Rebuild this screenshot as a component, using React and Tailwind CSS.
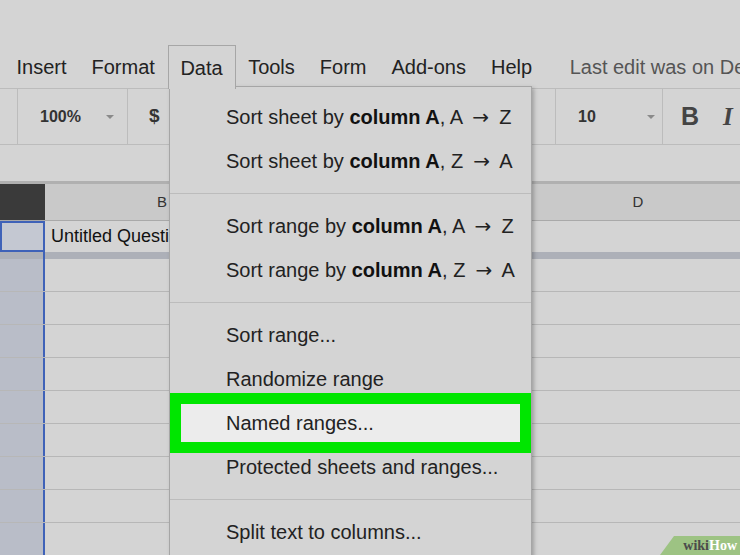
import React from 'react';

const menuBar = ['Insert', 'Format', 'Data', 'Tools', 'Form', 'Add-ons', 'Help'];

const Arrow = () => (
    <svg width="10" height="6" viewBox="0 0 10 6" className="inline-block">
        <path d="M1 1h8L5 5z" fill="#8a8a8a" />
    </svg>
);

const SortLabel = ({ what, from, to }) => (
    <span>
        Sort {what} by <b className="font-bold text-[#111]">column A</b>, {from}{' '}
        <span className="inline-block w-[26px] text-center" style={{ fontFamily: "'DejaVu Sans', sans-serif" }}>→</span>{' '}{to}
    </span>
);

const MenuItem = ({ children, highlight }) => (
    <div className="relative h-[44px] flex items-center pl-[56px] whitespace-nowrap">
        {highlight && (
            <div className="absolute left-0 right-0 -top-[8px] -bottom-[8px] border-[11px] border-[#00e600] bg-[#ececec]" />
        )}
        <span className="relative">{children}</span>
    </div>
);

const Separator = () => (
    <div className="h-[21px] flex items-center">
        <div className="w-full h-px bg-[#bcbcbc]" />
    </div>
);

const Row = () => (
    <div className="flex h-[33px] border-b border-[#b7b7b7]">
        <div className="w-[45px] bg-[#b9bdc8] border-r-2 border-[#3f62b8]" />
        <div className="flex-1" />
    </div>
);

export default function App() {
    return (
        <div
            className="relative w-[740px] h-[555px] overflow-hidden bg-[#d4d4d4] text-[#222]"
            style={{ fontFamily: "'Liberation Sans', Arial, sans-serif" }}
        >
            {/* menu bar */}
            <div className="pt-[45px]">
                <div className="flex items-stretch h-[43px] pl-[4px] text-[20px] whitespace-nowrap">
                    {menuBar.map((m) => (
                        <div
                            key={m}
                            className={`flex items-center ${m === 'Data'
                                ? 'pl-[11px] pr-[12px] ml-[1px] border border-b-0 border-[#a6a6a6] bg-[#d4d4d4] relative z-20 -mb-px'
                                : 'px-[11.5px] border border-transparent'
                                }`}
                        >
                            {m}
                        </div>
                    ))}
                    <div className="ml-[25px] flex items-center text-[#555]">
                        Last edit was on Dec
                    </div>
                </div>
            </div>

            {/* toolbar */}
            <div className="flex h-[57px] border-y border-[#bcbcbc] items-stretch">
                <div className="w-[18px] border-r border-[#bcbcbc]" />
                <div className="w-[110px] border-r border-[#bcbcbc] flex items-center pl-[22px] gap-[24px] font-bold text-[16px] text-[#333]">
                    100% <Arrow />
                </div>
                <div className="w-[428px] border-r border-[#bcbcbc] flex items-center pl-[21px] font-bold text-[19px] text-[#333]">
                    $
                </div>
                <div className="w-[107px] border-r border-[#bcbcbc] flex items-center pl-[22px] gap-[50px] font-bold text-[16px] text-[#333]">
                    10 <Arrow />
                </div>
                <div className="flex items-center pl-[18px] gap-[24px] text-[25px] text-[#444]">
                    <span className="font-bold">B</span>
                    <span className="italic font-bold" style={{ fontFamily: "'Liberation Serif', serif" }}>I</span>
                </div>
            </div>

            {/* formula bar */}
            <div className="h-[39px] border-b-[3px] border-[#b0b0b0]" />

            {/* column headers */}
            <div className="flex h-[37px] bg-[#c9c9c9] border-b border-[#a9a9a9] text-[15px] text-[#333]">
                <div className="w-[45px] bg-[#3a3a3a]" />
                <div className="w-[235px] border-r border-[#b0b0b0] flex items-center justify-center">B</div>
                <div className="w-[252px] border-r border-[#b0b0b0] flex items-center justify-center">C</div>
                <div className="flex-1 flex items-center justify-center pl-[4px]">D</div>
            </div>

            {/* row 1 */}
            <div className="flex h-[31px]">
                <div className="w-[45px] bg-[#c4c8d2] border-2 border-[#3f62b8]" />
                <div className="flex-1 flex items-center pl-[6px] text-[18px] text-[#111]">Untitled Questions</div>
            </div>
            <div className="flex h-[7px] bg-[#adb0b8]">
                <div className="w-[45px] border-r-2 border-[#3f62b8]" />
            </div>

            {/* rows */}
            {Array.from({ length: 9 }).map((_, i) => (
                <Row key={i} />
            ))}

            {/* data menu */}
            <div className="absolute z-10 left-[169px] top-[86px] w-[363px] h-[480px] bg-[#d4d4d4] border border-[#a6a6a6] shadow-[2px_2px_4px_rgba(0,0,0,0.25)] pt-[8px] text-[20px] text-[#222]">
                <MenuItem><SortLabel what="sheet" from="A" to="Z" /></MenuItem>
                <MenuItem><SortLabel what="sheet" from="Z" to="A" /></MenuItem>
                <Separator />
                <MenuItem><SortLabel what="range" from="A" to="Z" /></MenuItem>
                <MenuItem><SortLabel what="range" from="Z" to="A" /></MenuItem>
                <Separator />
                <MenuItem>Sort range...</MenuItem>
                <MenuItem>Randomize range</MenuItem>
                <MenuItem highlight>Named ranges...</MenuItem>
                <MenuItem>Protected sheets and ranges...</MenuItem>
                <Separator />
                <MenuItem>Split text to columns...</MenuItem>
            </div>

            {/* wikiHow badge */}
            <div className="absolute z-30 right-0 bottom-0 w-[80px] h-[19px] overflow-hidden">
                <svg className="absolute inset-0" width="80" height="19" viewBox="0 0 80 19">
                    <path d="M14 0H80V19H0z" fill="#9dc383" />
                </svg>
                <div
                    className="relative flex justify-end pr-[3px] h-full items-center text-[14px] font-bold leading-none"
                    style={{ fontFamily: "'Liberation Serif', serif" }}
                >
                    <span className="text-[#4b4b4b]">wiki</span>
                    <span className="text-white">How</span>
                </div>
            </div>
        </div>
    );
}
